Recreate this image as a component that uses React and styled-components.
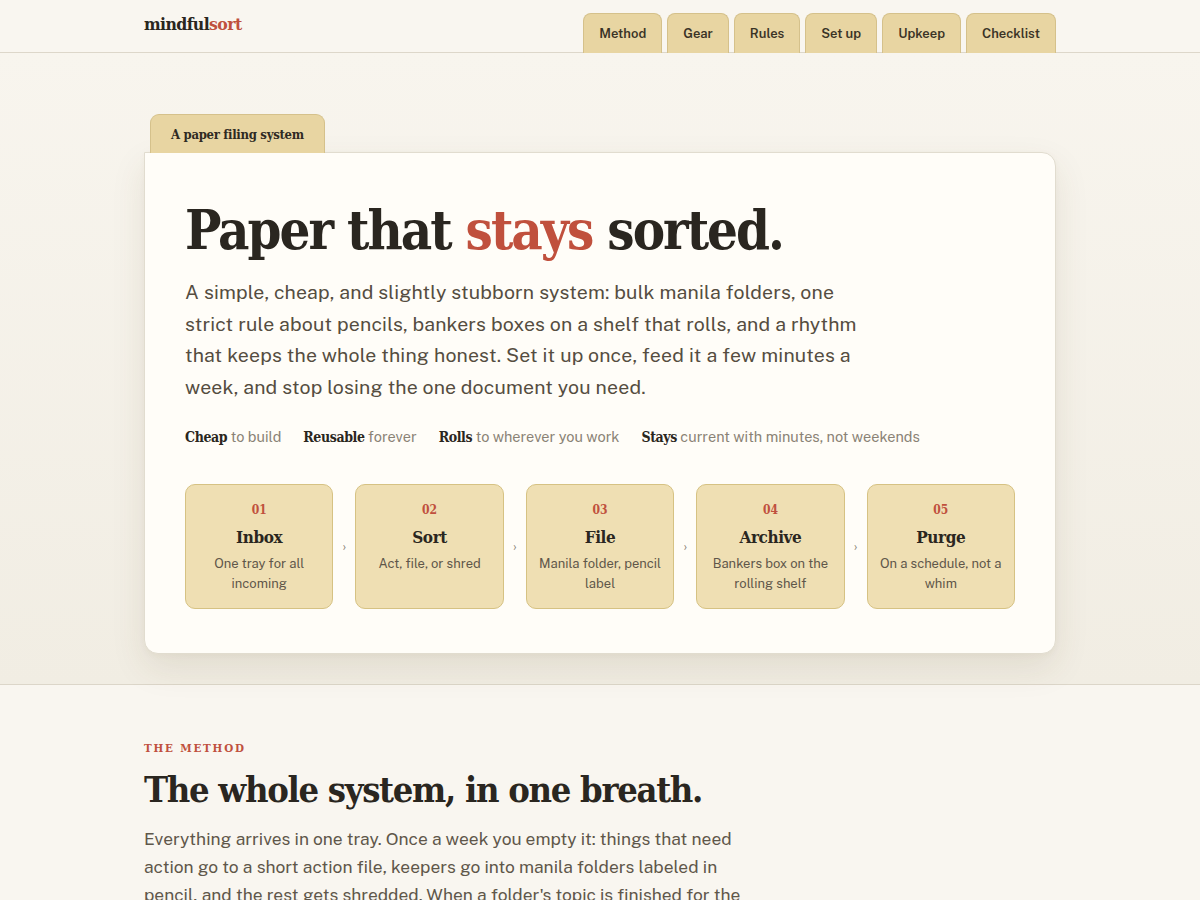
import React from 'react';
import styled, { createGlobalStyle } from 'styled-components';

const slab = `"DejaVu Serif Condensed", "DejaVu Serif", "Liberation Serif", serif`;
const sans = `"Public Sans", "Inter", "Noto Sans", sans-serif`;

const GlobalStyle = createGlobalStyle`
  html, body {
    margin: 0;
    padding: 0;
    background: #f9f6f0;
    color: #2a2620;
    font-family: ${sans};
  }
  * { box-sizing: border-box; }
`;

const tabs = ['Method', 'Gear', 'Rules', 'Set up', 'Upkeep', 'Checklist'];

const steps = [
  { n: '01', title: 'Inbox', text: 'One tray for all incoming' },
  { n: '02', title: 'Sort', text: 'Act, file, or shred' },
  { n: '03', title: 'File', text: 'Manila folder, pencil label' },
  { n: '04', title: 'Archive', text: 'Bankers box on the rolling shelf' },
  { n: '05', title: 'Purge', text: 'On a schedule, not a whim' },
];

const perks = [
  ['Cheap', 'to build'],
  ['Reusable', 'forever'],
  ['Rolls', 'to wherever you work'],
  ['Stays', 'current with minutes, not weekends'],
];

export default function App() {
  return (
    <>
      <GlobalStyle />
      <Header>
        <Wrap>
          <HeaderRow>
            <Logo>mindful<Accent>sort</Accent></Logo>
            <Nav>
              {tabs.map(t => <NavTab key={t}>{t}</NavTab>)}
            </Nav>
          </HeaderRow>
        </Wrap>
      </Header>

      <Hero>
        <Wrap>
          <FolderTab>A paper filing system</FolderTab>
          <Card>
            <Title>Paper that <Accent>stays</Accent> sorted.</Title>
            <Lead>
              A simple, cheap, and slightly stubborn system: bulk manila folders, one
              strict rule about pencils, bankers boxes on a shelf that rolls, and a rhythm
              that keeps the whole thing honest. Set it up once, feed it a few minutes a
              week, and stop losing the one document you need.
            </Lead>
            <Perks>
              {perks.map(([b, rest]) => (
                <Perk key={b}><strong>{b}</strong> {rest}</Perk>
              ))}
            </Perks>
            <Steps>
              {steps.map((s, i) => (
                <React.Fragment key={s.n}>
                  {i > 0 && <Chevron>›</Chevron>}
                  <Step>
                    <StepNum>{s.n}</StepNum>
                    <StepTitle>{s.title}</StepTitle>
                    <StepText>{s.text}</StepText>
                  </Step>
                </React.Fragment>
              ))}
            </Steps>
          </Card>
        </Wrap>
      </Hero>

      <Section>
        <Wrap>
          <Eyebrow>The method</Eyebrow>
          <H2>The whole system, in one breath.</H2>
          <Body>
            Everything arrives in one tray. Once a week you empty it: things that need
            action go to a short action file, keepers go into manila folders labeled in
            pencil, and the rest gets shredded. When a folder's topic is finished for the
            year, it moves to a bankers box on the rolling shelf.
          </Body>
        </Wrap>
      </Section>
    </>
  );
}

const Wrap = styled.div`
  width: 912px;
  margin: 0 auto;
`;

const Header = styled.header`
  border-bottom: 1px solid #ddd7ca;
  background: #f9f6f0;
`;

const HeaderRow = styled.div`
  height: 52px;
  display: flex;
  align-items: flex-end;
  justify-content: space-between;
`;

const Logo = styled.div`
  font-family: ${slab};
  font-weight: 700;
  font-size: 17.5px;
  letter-spacing: -0.6px;
  color: #2a2620;
  align-self: flex-start;
  padding-top: 14px;
`;

const Accent = styled.span`
  color: #c0503d;
`;

const Nav = styled.nav`
  display: flex;
  gap: 5px;
  margin-bottom: -1px;
`;

const NavTab = styled.a`
  display: flex;
  align-items: center;
  height: 40px;
  padding: 0 15px;
  background: #e8d5a2;
  border: 1px solid #d5c18b;
  border-bottom: none;
  border-radius: 8px 8px 0 0;
  font-family: ${sans};
  font-weight: 600;
  font-size: 13px;
  color: #3a3326;
`;

const Hero = styled.section`
  padding: 61px 0 30px;
  background: linear-gradient(#f8f5ee, #f1ede3);
  border-bottom: 1px solid #dcd6c9;
`;

const FolderTab = styled.div`
  display: inline-flex;
  align-items: center;
  margin-left: 6px;
  height: 39px;
  padding: 0 20px;
  background: #e8d5a2;
  border: 1px solid #d5c18b;
  border-bottom: none;
  border-radius: 9px 9px 0 0;
  font-family: ${slab};
  font-weight: 600;
  font-size: 13px;
  letter-spacing: -0.3px;
  color: #2f2a22;
  position: relative;
  z-index: 1;
  margin-bottom: -1px;
`;

const Card = styled.div`
  background: #fffdf8;
  border: 1px solid #e1dccf;
  border-radius: 0 14px 14px 14px;
  box-shadow: 0 14px 34px rgba(90, 70, 30, 0.1), 0 2px 6px rgba(90, 70, 30, 0.04);
  padding: 45px 40px 44px;
`;

const Title = styled.h1`
  margin: 0;
  font-family: ${slab};
  font-weight: 700;
  font-size: 54px;
  line-height: 64px;
  letter-spacing: -2px;
  color: #2a2620;
`;

const Lead = styled.p`
  margin: 14px 0 0;
  max-width: 680px;
  font-size: 19.5px;
  letter-spacing: 0.15px;
  line-height: 31.5px;
  color: #554d41;
`;

const Perks = styled.div`
  display: flex;
  gap: 22px;
  margin-top: 26px;
`;

const Perk = styled.div`
  font-size: 14.5px;
  color: #8a8275;
  strong {
    font-family: ${slab};
    font-weight: 700;
    font-size: 14px;
    letter-spacing: -0.4px;
    color: #2a2620;
  }
`;

const Steps = styled.div`
  display: flex;
  align-items: center;
  margin-top: 39px;
`;

const Chevron = styled.span`
  width: 22px;
  text-align: center;
  color: #8a8275;
  font-size: 13px;
`;

const Step = styled.div`
  flex: 1;
  height: 125px;
  background: #efdfb3;
  border: 1px solid #d6c283;
  border-radius: 10px;
  padding: 17px 12px 0;
  text-align: center;
`;

const StepNum = styled.div`
  font-family: ${slab};
  font-weight: 700;
  font-size: 12px;
  color: #c0503d;
  line-height: 16px;
`;

const StepTitle = styled.div`
  margin-top: 9px;
  font-family: ${slab};
  font-weight: 700;
  font-size: 17px;
  letter-spacing: -0.4px;
  color: #2a2620;
  line-height: 20px;
`;

const StepText = styled.div`
  margin-top: 7px;
  font-size: 13px;
  line-height: 20px;
  color: #5f574a;
`;

const Section = styled.section`
  padding: 56px 0 40px;
`;

const Eyebrow = styled.div`
  font-family: ${slab};
  font-weight: 700;
  font-size: 11.5px;
  letter-spacing: 1.8px;
  text-transform: uppercase;
  color: #c0503d;
`;

const H2 = styled.h2`
  margin: 10px 0 0;
  font-family: ${slab};
  font-weight: 700;
  font-size: 36px;
  line-height: 48px;
  letter-spacing: -1.3px;
  color: #2a2620;
`;

const Body = styled.p`
  margin: 12px 0 0;
  max-width: 600px;
  font-size: 17.4px;
  line-height: 28px;
  color: #5f574a;
`;
